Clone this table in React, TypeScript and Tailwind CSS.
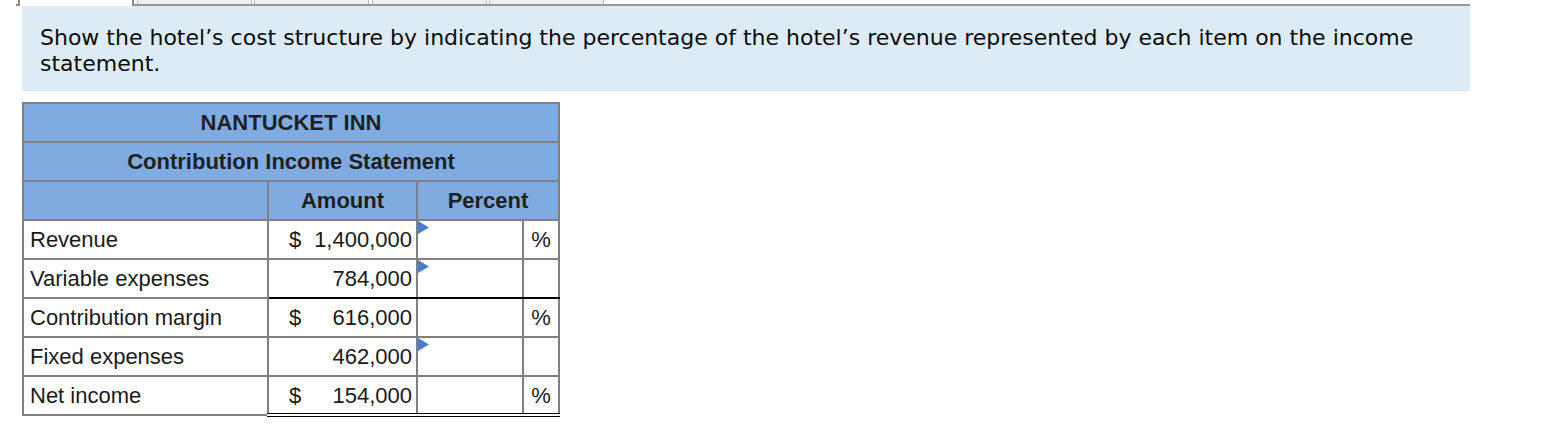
import React from 'react'

interface Row {
  label: string
  dollar: boolean
  amount: string
  showPct: boolean
  marker: boolean
  rule: 'none' | 'single' | 'double'
}

const ROWS: Row[] = [
  { label: 'Revenue', dollar: true, amount: '1,400,000', showPct: true, marker: true, rule: 'none' },
  { label: 'Variable expenses', dollar: false, amount: '784,000', showPct: false, marker: true, rule: 'single' },
  { label: 'Contribution margin', dollar: true, amount: '616,000', showPct: true, marker: false, rule: 'none' },
  { label: 'Fixed expenses', dollar: false, amount: '462,000', showPct: false, marker: true, rule: 'single' },
  { label: 'Net income', dollar: true, amount: '154,000', showPct: true, marker: false, rule: 'double' },
]

function Marker() {
  return (
    <svg className="absolute left-0 top-0" width="11" height="13" viewBox="0 0 11 13">
      <path d="M0 0 L11 6.5 L0 13 Z" fill="#4a7fc6" />
    </svg>
  )
}

function TabStrip() {
  const tabs = [137, 254, 372, 489]
  return (
    <div className="relative h-[6px] w-full">
      <div className="absolute left-[16px] top-[4px] h-[2px] w-[4px] bg-[#8a8a8a]" />
      <div className="absolute left-[18px] top-0 h-[6px] w-[2px] bg-[#8a8a8a]" />
      <div className="absolute left-[132px] top-[4px] h-[2px] w-[1338px] bg-[#9a9a9a]" />
      <div className="absolute left-[132px] top-0 h-[6px] w-[2px] bg-[#8a8a8a]" />
      {tabs.map((x) => (
        <div
          key={x}
          className="absolute top-0 h-[4px] w-[115px] border-x border-[#b8b8b8] bg-[#f0f0f0]"
          style={{ left: x }}
        />
      ))}
    </div>
  )
}

export default function App() {
  const cell = 'border-2 border-[#808080] h-[39px] p-0'
  return (
    <div className="h-[424px] w-[1552px] bg-white">
      <TabStrip />
      <div className="ml-[22px] w-[1448px] bg-[#ddebf7] pl-[18px] pr-4 pt-[19px] pb-[14px] font-['DejaVu_Sans',Verdana,sans-serif] text-[22px] leading-[26px] text-[#0a0a0a]">
        Show the hotel’s cost structure by indicating the percentage of the hotel’s revenue represented by each item on
        the income statement.
      </div>

      <table className="ml-[22px] mt-[11px] w-[536px] table-fixed border-collapse font-['Liberation_Sans',Arial,sans-serif] text-[22px] text-[#1a1a1a]">
        <colgroup>
          <col className="w-[245px]" />
          <col className="w-[149px]" />
          <col className="w-[106px]" />
          <col className="w-[36px]" />
        </colgroup>
        <thead className="bg-[#7fabe0] font-bold text-[#1f1f1f]">
          <tr>
            <th colSpan={4} className={cell}>
              NANTUCKET INN
            </th>
          </tr>
          <tr>
            <th colSpan={4} className={cell}>
              Contribution Income Statement
            </th>
          </tr>
          <tr>
            <th className={cell} />
            <th className={cell}>Amount</th>
            <th colSpan={2} className={cell}>
              Percent
            </th>
          </tr>
        </thead>
        <tbody>
          {ROWS.map((row) => {
            const rule =
              row.rule === 'single'
                ? 'border-b-black'
                : row.rule === 'double'
                  ? 'border-b-4 border-b-black border-double'
                  : ''
            return (
              <tr key={row.label}>
                <td className={`${cell} pl-[6px] text-left`}>{row.label}</td>
                <td className={`${cell} ${rule}`}>
                  <div className="flex items-center justify-between pl-[20px] pr-[4px]">
                    <span>{row.dollar ? '$' : ''}</span>
                    <span>{row.amount}</span>
                  </div>
                </td>
                <td className={`${cell} ${rule} relative`}>{row.marker && <Marker />}</td>
                <td className={`${cell} ${rule} text-center`}>{row.showPct ? '%' : ''}</td>
              </tr>
            )
          })}
        </tbody>
      </table>
    </div>
  )
}
